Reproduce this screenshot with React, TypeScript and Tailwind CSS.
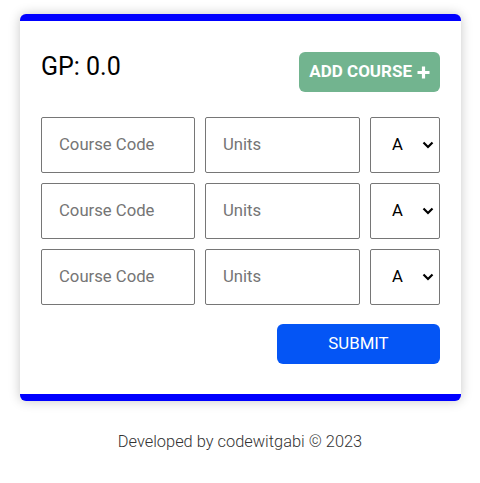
import React from "react";

function Row() {
  return (
    <div className="flex gap-[10px]">
      <input
        placeholder="Course Code"
        className="h-[56px] w-[154px] min-w-0 rounded-[2px] border border-[#767676] px-[17px] pb-[1px] text-[16.7px] text-black outline-none placeholder:text-[#757575]"
      />
      <input
        placeholder="Units"
        className="h-[56px] min-w-0 flex-1 rounded-[2px] border border-[#767676] px-[17px] pb-[1px] text-[16.7px] text-black outline-none placeholder:text-[#757575]"
      />
      <div className="relative h-[56px] w-[70px] rounded-[2px] border border-[#767676]">
        <span className="absolute left-[21px] top-1/2 -translate-y-1/2 text-[16.7px] text-black">A</span>
        <svg
          className="absolute right-[5px] top-1/2 -translate-y-1/2"
          width="12"
          height="8"
          viewBox="0 0 12 8"
        >
          <path d="M1.5 1.5 L6 6 L10.5 1.5" fill="none" stroke="#000" strokeWidth="2.2" />
        </svg>
      </div>
    </div>
  );
}

export default function App() {
  return (
    <div className="min-h-[483px] bg-white pt-[14px]" style={{ fontFamily: "Roboto, 'Liberation Sans', sans-serif" }}>
      <div className="ml-[20px] w-[441px] rounded-[6px] border-y-[7px] border-[#0000ff] bg-white px-[21px] pt-[31px] pb-[30px] shadow-[0_0_12px_rgba(0,0,0,0.22)]">
        <div className="flex items-start justify-between">
          <div className="text-[25px] leading-[29px] text-black">GP: 0.0</div>
          <button className="flex h-[40px] items-center gap-[5px] rounded-[6px] bg-[#72b48f] px-[10px] text-[17px] font-bold text-white">
            ADD COURSE
            <svg width="13" height="13" viewBox="0 0 13 13">
              <path d="M6.5 0.5 V12.5 M0.5 6.5 H12.5" stroke="#fff" strokeWidth="3.2" />
            </svg>
          </button>
        </div>
        <div className="mt-[25px] flex flex-col gap-[10px]">
          <Row />
          <Row />
          <Row />
        </div>
        <div className="mt-[19px] flex justify-end">
          <button className="h-[40px] w-[163px] rounded-[6px] bg-[#0455f5] text-[16.8px] text-white">SUBMIT</button>
        </div>
      </div>
      <p className="mt-[29px] text-center text-[16.4px] font-light leading-[24px] text-[#333]">
        Developed by codewitgabi © 2023
      </p>
    </div>
  );
}
